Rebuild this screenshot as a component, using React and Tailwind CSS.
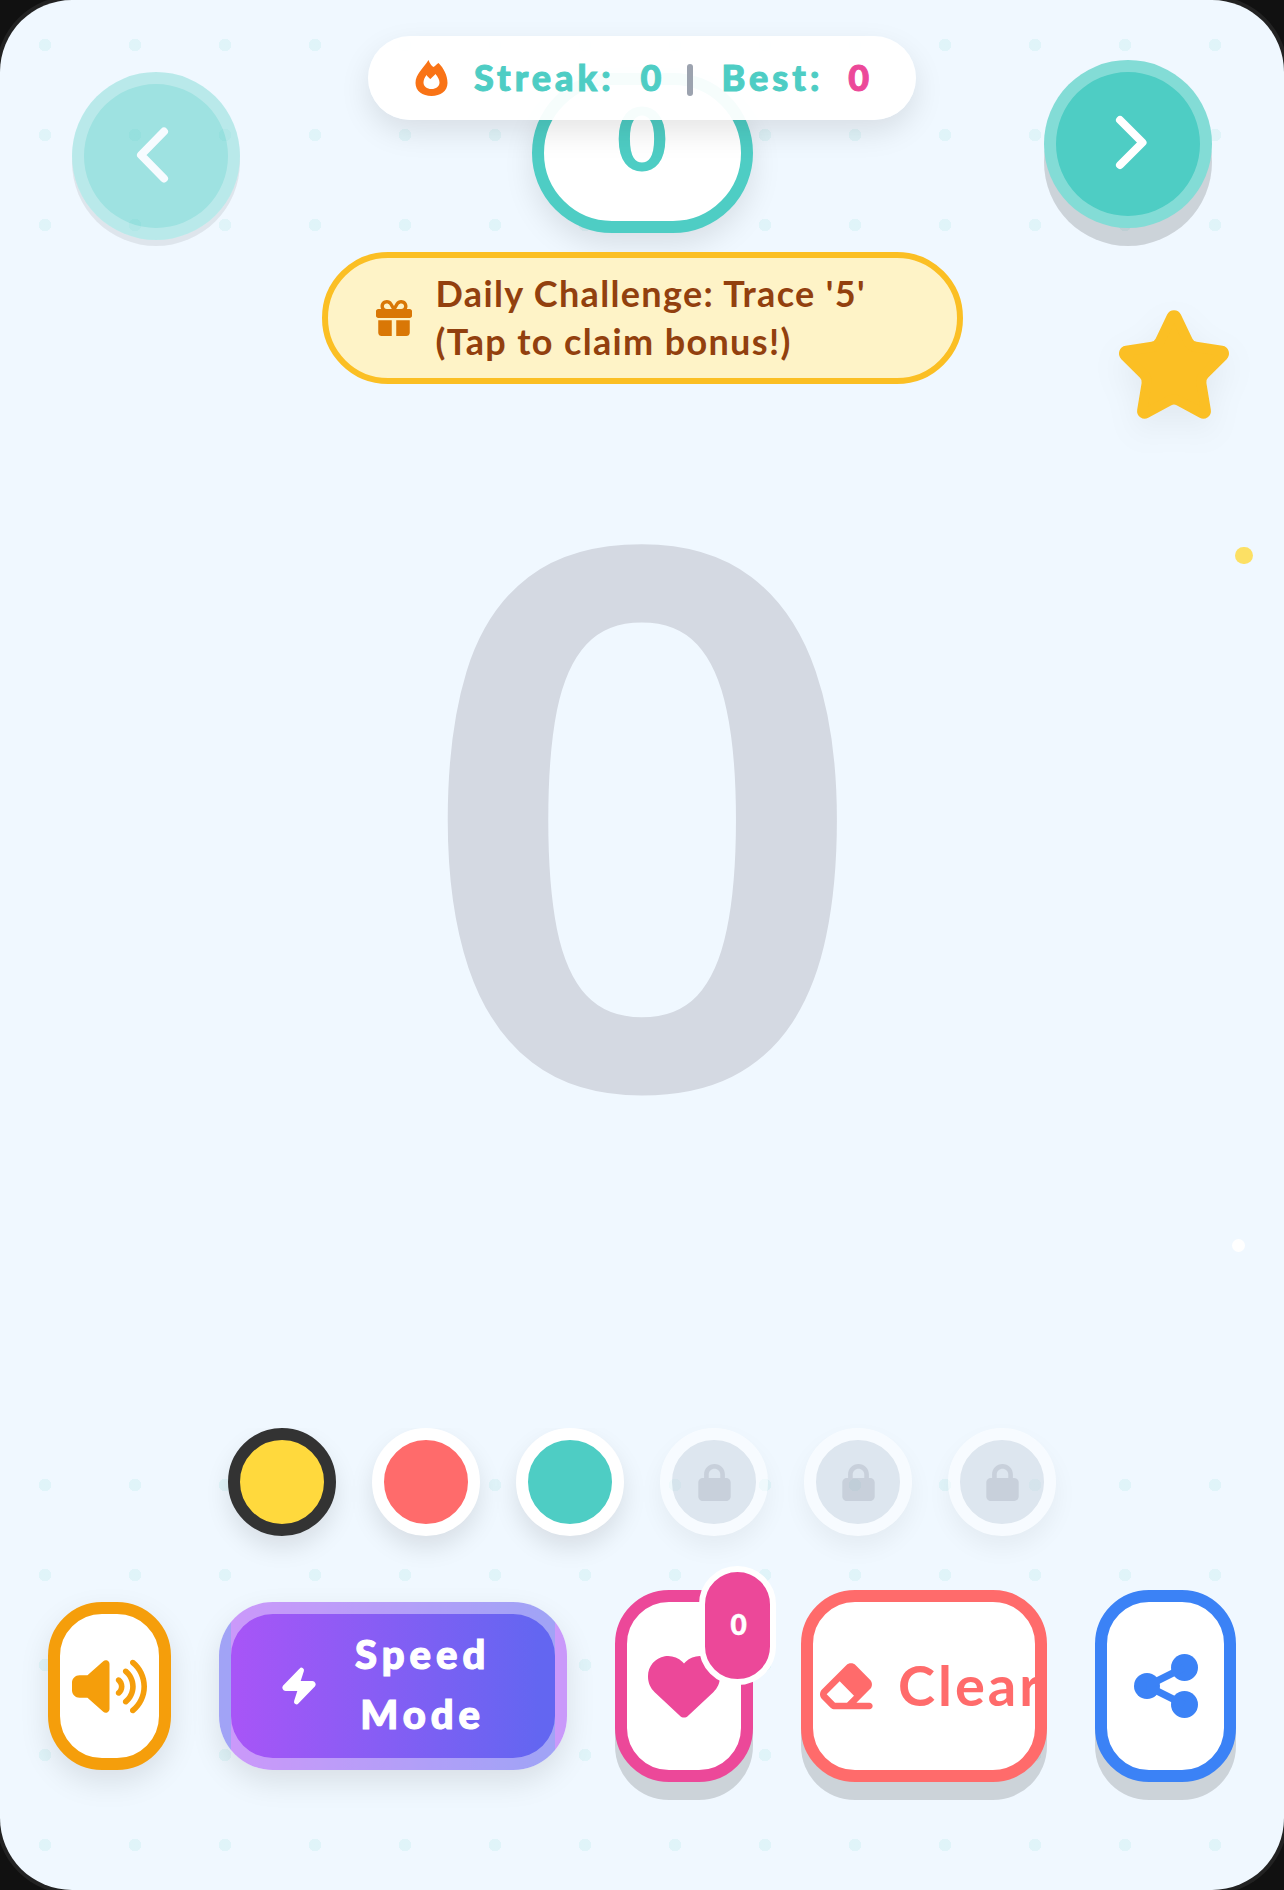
import React from "react";
import { FaGift, FaVolumeHigh, FaHeart, FaEraser, FaLock } from "react-icons/fa6";
import { Star, Zap } from "lucide-react";

const font = { fontFamily: '"Lato", "Noto Sans", sans-serif' };

function Swatch({ color, active }) {
  return (
    <div
      className={`w-[108px] h-[108px] rounded-full border-[12px] shadow-[0_12px_24px_rgba(0,0,0,0.1)] ${active ? "border-[#333333]" : "border-white"}`}
      style={{ backgroundColor: color }}
    />
  );
}

function Locked() {
  return (
    <div className="w-[108px] h-[108px] rounded-full border-[12px] border-white bg-[#cbd5e0] opacity-50 shadow-[0_12px_24px_rgba(0,0,0,0.1)] flex items-center justify-center">
      <FaLock size={37} color="#a1aab8" />
    </div>
  );
}

export default function App() {
  return (
    <div className="w-[1284px] h-[1890px] bg-[#111111] overflow-hidden" style={font}>
      <div className="relative w-full h-full rounded-[72px] overflow-hidden shadow-[0_0_0_4px_#222222] bg-[#f0f8ff] bg-[radial-gradient(circle,#4ecdc41a_6px,transparent_6.5px)] bg-[size:90px_90px] flex flex-col">
        {/* header */}
        <div className="relative h-[252px] shrink-0 px-[72px] pt-[60px] flex items-start justify-between">
          <button className="mt-[12px] w-[168px] h-[168px] rounded-full bg-[#4ecdc4] border-[12px] border-white/30 opacity-50 shadow-[0_6px_0_rgba(0,0,0,0.15)] flex items-center justify-center">
            <svg width="40" height="60" viewBox="0 0 40 60" fill="none" stroke="white" strokeWidth="8" strokeLinecap="round" strokeLinejoin="round">
              <path d="M28 5.5 5 29l23 23.5" />
            </svg>
          </button>
          <div className="mt-[13px] w-[221px] h-[160px] rounded-full border-[12px] border-[#4ecdc4] bg-white shadow-[0_12px_30px_rgba(0,0,0,0.1)] flex items-center justify-center">
            <span className="text-[88px] leading-none font-bold text-[#4ecdc4] -mt-[32px]">0</span>
          </div>
          <button className="w-[168px] h-[168px] rounded-full bg-[#4ecdc4] border-[12px] border-white/30 shadow-[0_18px_0_rgba(0,0,0,0.15)] flex items-center justify-center">
            <svg width="40" height="60" viewBox="0 0 40 60" fill="none" stroke="white" strokeWidth="8" strokeLinecap="round" strokeLinejoin="round">
              <path d="M12 6l22.5 22.5L12 51" />
            </svg>
          </button>
          <div className="absolute top-[36px] left-1/2 -translate-x-1/2 w-[548px] h-[84px] pl-[47px] rounded-full bg-white/95 shadow-[0_12px_30px_rgba(0,0,0,0.1)] flex items-center gap-[26px] whitespace-nowrap text-[36px] leading-none font-black tracking-[4px] text-[#4ecdc4] [-webkit-text-stroke:1px_currentColor]">
            <svg width="33" height="36" viewBox="0 0 32 36" fill="#f97316" fillRule="evenodd" className="shrink-0">
              <path d="M13 0C14 3 16 6 18 7C19.5 6 21 4.5 23 3C28 8 32 15 32 23C32 31 25 36 16 36C7 36 0 31 0 23C0 14 8 8 13 0ZM11 15C12.5 17 14 18.5 15 19C16.5 17.5 18.5 15.5 20 14C22.5 17 24 20 24 22.5C24 26.5 20.5 29 16 29C11.5 29 8 26.5 8 22.5C8 20 9 17.5 11 15Z" />
            </svg>
            <span className="-mt-[2px]">Streak:</span>
            <span className="-mt-[2px]">0</span>
            <span className="w-[6px] h-[32px] rounded-full bg-[#9ca3af] mt-[4px] -ml-[4px] mr-[2px]" />
            <span className="-mt-[2px]">Best:</span>
            <span className="text-[#ec4899] -mt-[2px] -ml-[1px]">0</span>
          </div>
        </div>

        {/* canvas */}
        <div className="relative flex-1 bg-[#f0f8ff] flex flex-col items-center">
          <div className="w-[641px] h-[132px] shrink-0 rounded-full border-[6px] border-[#fbbf24] bg-[#fef3c7] flex items-center gap-[24px] pl-[48px] text-[#92400e] text-[36px] leading-[48px] font-bold tracking-[1.35px]">
            <FaGift size={36} color="#d97706" className="shrink-0" />
            <div className="-mt-[2px]">
              <div>Daily Challenge: Trace '5'</div>
              <div>(Tap to claim bonus!)</div>
            </div>
          </div>
          <Star size={120} className="absolute top-[53px] right-[50px] scale-y-[1.03] origin-top drop-shadow-[0_12px_16px_rgba(0,0,0,0.06)]" fill="#fbbf24" stroke="#fbbf24" />
          <div className="flex-1 flex items-center justify-center pb-[218px]">
            <span className="text-[750px] leading-none font-semibold text-[#d4d9e2] scale-x-[1.06]" style={{ fontFamily: '"Noto Sans", sans-serif' }}>0</span>
          </div>
          <div className="absolute top-[295px] left-[1235px] w-[18px] h-[17px] rounded-full bg-[#ffd93d] opacity-80" />
          <div className="absolute top-[987px] left-[1232px] w-[13px] h-[13px] rounded-full bg-white" />
        </div>

        {/* colours */}
        <div className="shrink-0 flex justify-center gap-[36px]">
          <Swatch color="#ffd93d" active />
          <Swatch color="#ff6b6b" />
          <Swatch color="#4ecdc4" />
          <Locked />
          <Locked />
          <Locked />
        </div>

        {/* actions */}
        <div className="shrink-0 mt-[54px] mb-[108px] h-[192px] px-[48px] flex items-center gap-[48px]">
          <button className="w-[123px] h-[168px] rounded-[54px] border-[12px] border-[#f59e0b] bg-white shadow-[0_12px_30px_rgba(0,0,0,0.1)] flex items-center justify-center">
            <FaVolumeHigh size={75} color="#f59e0b" className="shrink-0" />
          </button>
          <button className="w-[348px] h-[168px] rounded-[54px] border-[12px] border-white/40 bg-linear-to-r/srgb from-[#a855f7] to-[#6366f1] to-95% shadow-[0_12px_30px_rgba(0,0,0,0.1)] flex items-center pl-[48px] gap-[36px] text-white">
            <Zap size={40} fill="white" stroke="white" className="shrink-0" />
            <span className="text-[40px] leading-[60px] font-black tracking-[5px] text-center -mt-[5px] [-webkit-text-stroke:1.2px_currentColor]">Speed<br />Mode</span>
          </button>
          <div className="relative w-[138px] h-[192px] rounded-[54px] border-[12px] border-[#ec4899] bg-white shadow-[0_18px_0_rgba(0,0,0,0.15)] flex items-center justify-center">
            <FaHeart size={72} color="#ec4899" />
            <div className="absolute -top-[36px] left-[72px] w-[77px] h-[119px] rounded-full border-[6px] border-white bg-[#ec4899] flex items-center justify-center text-white text-[28px] font-black pb-[3px] pl-[2px] [-webkit-text-stroke:0.5px_currentColor]">0</div>
          </div>
          <div className="w-[246px] h-[192px] rounded-[54px] border-[12px] border-[#ff6b6b] bg-white shadow-[0_18px_0_rgba(0,0,0,0.15)] overflow-hidden flex items-center pl-[3px] gap-[22px] text-[#ff6b6b] text-[56px] font-bold tracking-[3px] whitespace-nowrap">
            <FaEraser size={60} className="shrink-0" />
            <span className="-mt-[2px]">Clear</span>
          </div>
          <div className="w-[141px] h-[192px] rounded-[54px] border-[12px] border-[#3b82f6] bg-white shadow-[0_18px_0_rgba(0,0,0,0.15)] flex items-center justify-center">
            <svg width="64" height="64" viewBox="0 0 64 64" fill="#3b82f6" stroke="#3b82f6">
              <circle cx="13" cy="32" r="13" stroke="none" />
              <circle cx="50.5" cy="13.5" r="13.5" stroke="none" />
              <circle cx="50.5" cy="50.5" r="13.5" stroke="none" />
              <path d="M13 32 50 13.5M13 32l37 18.5" strokeWidth="7" fill="none" />
            </svg>
          </div>
        </div>
      </div>
    </div>
  );
}
